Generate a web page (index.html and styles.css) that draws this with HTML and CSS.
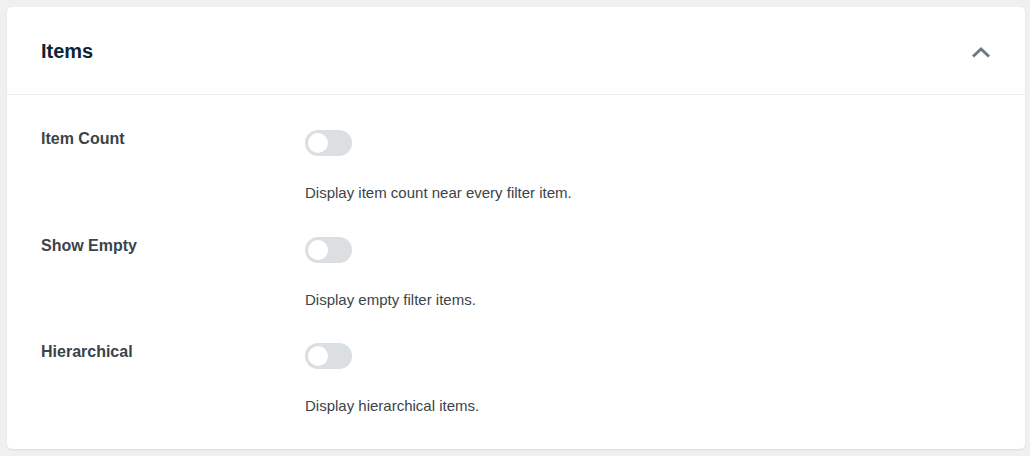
FILE: index.html
```html
<!DOCTYPE html>
<html lang="en">
<head>
<meta charset="utf-8">
<title>Items</title>
<link rel="stylesheet" href="styles.css">
</head>
<body>
<section class="panel">
  <header class="panel-head">
    <h2 class="panel-title">Items</h2>
    <button class="collapse" type="button" aria-label="Collapse">
      <svg width="20" height="12" viewBox="0 0 20 12"><polyline points="2,10.5 10,3 18,10.5" fill="none" stroke="#6a7b86" stroke-width="3"/></svg>
    </button>
  </header>
  <div class="panel-body">
    <div class="field">
      <div class="field-label">Item Count</div>
      <div class="field-control">
        <span class="toggle"><span class="knob"></span></span>
        <p class="field-desc">Display item count near every filter item.</p>
      </div>
    </div>
    <div class="field">
      <div class="field-label">Show Empty</div>
      <div class="field-control">
        <span class="toggle"><span class="knob"></span></span>
        <p class="field-desc">Display empty filter items.</p>
      </div>
    </div>
    <div class="field">
      <div class="field-label">Hierarchical</div>
      <div class="field-control">
        <span class="toggle"><span class="knob"></span></span>
        <p class="field-desc">Display hierarchical items.</p>
      </div>
    </div>
  </div>
</section>
</body>
</html>
```

FILE: styles.css
```css
* { box-sizing: border-box; }
html, body { height: 100%; }
body {
  margin: 0;
  padding: 7px 5px 7px 7px;
  background: #f0f0f1;
  font-family: "Liberation Sans", Arial, sans-serif;
  color: #3c434a;
}
.panel {
  background: #fff;
  border-radius: 5px;
  box-shadow: 0 1px 2px rgba(0, 0, 0, 0.09);
  height: 442px;
  display: flex;
  flex-direction: column;
}
.panel-head {
  height: 88px;
  border-bottom: 1px solid #ececee;
  display: flex;
  align-items: center;
  justify-content: space-between;
  padding: 0 34px 0 34px;
}
.panel-title {
  margin: 0;
  font-size: 20px;
  font-weight: 700;
  color: #0d2435;
  line-height: 24px;
}
.collapse {
  border: 0;
  background: none;
  padding: 0;
  width: 20px;
  height: 12px;
  display: flex;
  margin-top: 2px;
}
.panel-body {
  padding: 35px 34px 0 34px;
  display: flex;
  flex-direction: column;
  gap: 33.5px;
}
.field {
  display: grid;
  grid-template-columns: 264px 1fr;
}
.field-label {
  font-size: 16px;
  font-weight: 700;
  line-height: 18px;
  color: #3c434a;
}
.field-control {
  display: flex;
  flex-direction: column;
  align-items: flex-start;
}
.toggle {
  display: block;
  position: relative;
  width: 47px;
  height: 26px;
  border-radius: 13px;
  background: #dcdfe1;
}
.knob {
  position: absolute;
  left: 3px;
  top: 3px;
  width: 20px;
  height: 20px;
  border-radius: 50%;
  background: #fff;
}
.field-desc {
  margin: 27px 0 0;
  font-size: 15px;
  line-height: 20px;
  color: #3c434a;
}
```
